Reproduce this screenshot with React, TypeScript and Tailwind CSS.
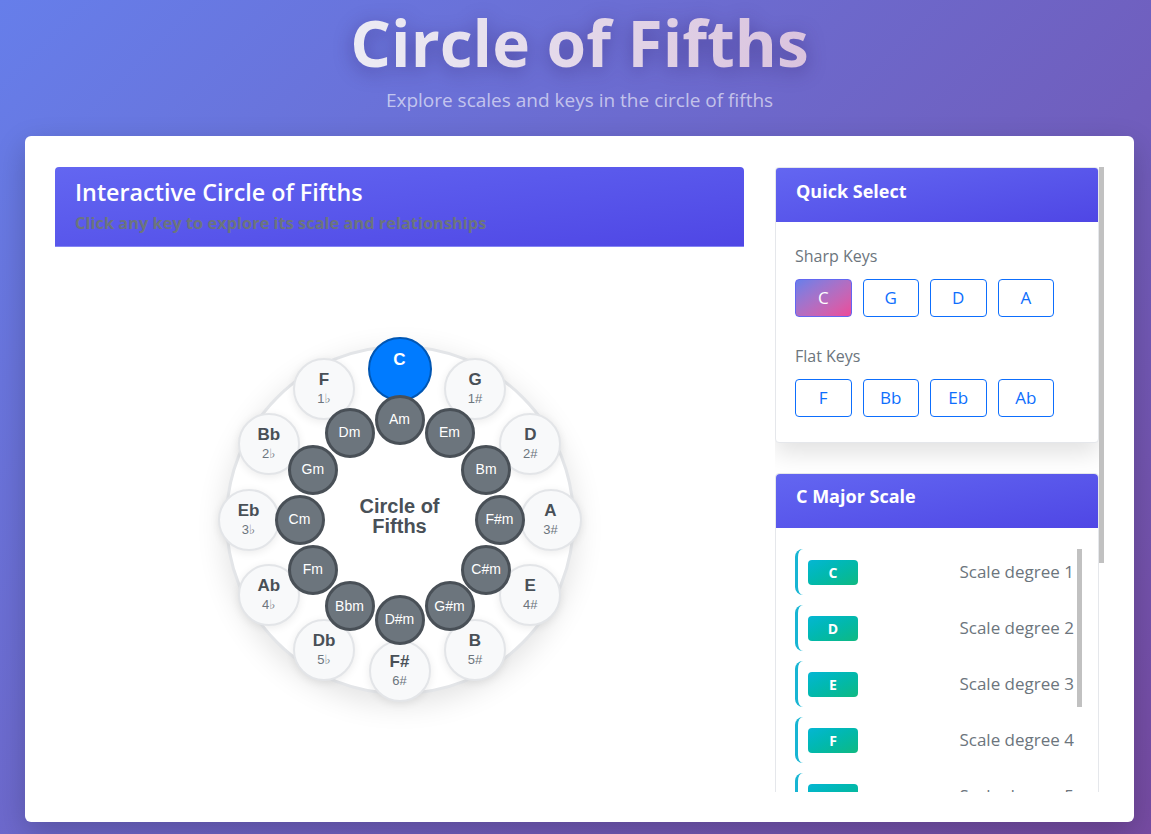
import React from "react";

const majors = [
  { name: "C", sig: "" },
  { name: "G", sig: "1#" },
  { name: "D", sig: "2#" },
  { name: "A", sig: "3#" },
  { name: "E", sig: "4#" },
  { name: "B", sig: "5#" },
  { name: "F#", sig: "6#" },
  { name: "Db", sig: "5♭" },
  { name: "Ab", sig: "4♭" },
  { name: "Eb", sig: "3♭" },
  { name: "Bb", sig: "2♭" },
  { name: "F", sig: "1♭" },
];

const minors = ["Am", "Em", "Bm", "F#m", "C#m", "G#m", "D#m", "Bbm", "Fm", "Cm", "Gm", "Dm"];

const sharpKeys = ["C", "G", "D", "A"];
const flatKeys = ["F", "Bb", "Eb", "Ab"];
const scale = ["C", "D", "E", "F", "G", "A", "B"];

// place a node on the ring, 0 = top, clockwise (172 = centre of the padding box)
function pos(i: number, r: number) {
  const a = (i * Math.PI) / 6;
  return { left: 172 + r * Math.sin(a), top: 172 - r * Math.cos(a) };
}

function KeyButton({ label, active }: { label: string; active?: boolean }) {
  return (
    <button
      className={
        active
          ? "h-[38px] w-[56.5px] rounded-[4px] border border-[#6366f1] bg-gradient-to-br from-[#667eea] to-[#ec4899] text-[17px] text-white"
          : "h-[38px] w-[56.5px] rounded-[4px] border border-[#0d6efd] bg-white text-[17px] text-[#0d6efd]"
      }
    >
      {label}
    </button>
  );
}

function CircleOfFifths() {
  return (
    <div className="relative h-[350px] w-[350px] rounded-full border-[3px] border-[#e3e5e8] bg-white shadow-[0_8px_30px_rgba(0,0,0,0.12)] font-['Liberation_Sans',Arial,sans-serif]">
      {majors.map((k, i) => {
        const active = i === 0;
        return (
          <div
            key={k.name}
            style={pos(i, 151)}
            className={
              active
                ? "absolute flex h-[64px] w-[64px] -translate-x-1/2 -translate-y-1/2 flex-col items-center justify-center rounded-full border-[2px] border-[#0056b3] bg-[#007bff] text-white"
                : "absolute flex h-[62px] w-[62px] -translate-x-1/2 -translate-y-1/2 flex-col items-center justify-center rounded-full border-[2px] border-[#e3e5e8] bg-[#f8f9fa] shadow-[0_2px_8px_rgba(0,0,0,0.08)]"
            }
          >
            <span className={active ? "text-[17px] font-bold leading-[20px] text-white" : "text-[17px] font-bold leading-[20px] text-[#495057]"}>
              {k.name}
            </span>
            <span className="h-[18px] text-[13px] leading-[18px] text-[#6c757d] font-['Liberation_Sans','DejaVu_Sans',sans-serif]">{k.sig}</span>
          </div>
        );
      })}
      {minors.map((m, i) => (
        <div
          key={m}
          style={pos(i, 100)}
          className="absolute flex h-[50px] w-[50px] -translate-x-1/2 -translate-y-1/2 items-center justify-center rounded-full border-[3px] border-[#495057] bg-[#6c757d] text-[14px] text-white"
        >
          {m}
        </div>
      ))}
      <div className="absolute inset-0 flex items-center justify-center pb-[7px]">
        <p className="text-center text-[20px] font-bold leading-[20px] text-[#495057]">
          Circle of
          <br />
          Fifths
        </p>
      </div>
    </div>
  );
}

export default function App() {
  return (
    <div className="h-screen w-full overflow-hidden bg-[linear-gradient(135deg,#667eea_0%,#764ba2_100%)] font-['Open_Sans',sans-serif]">
      <div className="ml-[25px] w-[1109px]">
        {/* Title */}
        <header className="h-[136px] pt-[7px] text-center">
          <h1 className="inline-block bg-gradient-to-r from-[#ececf4] to-[#dac3de] bg-clip-text text-[64px] font-bold leading-[72px] text-transparent drop-shadow-[0_4px_10px_rgba(40,20,90,0.4)]">
            Circle of Fifths
          </h1>
          <p className="mt-[8px] text-[19px] leading-[27px] text-white/60">Explore scales and keys in the circle of fifths</p>
        </header>

        {/* Main card */}
        <main className="rounded-[6px] bg-white px-[30px] pt-[31px] pb-[30px] shadow-[0_10px_30px_rgba(0,0,0,0.2)]">
          <div className="grid h-[625px] grid-cols-[689px_1fr] gap-[31px]">
            {/* Left: circle */}
            <section className="flex flex-col">
              <div className="h-[80px] rounded-t-[4px] border-b border-[#8485f3] bg-gradient-to-br from-[#6366f1] to-[#4f46e5] px-[20px] pt-[11px]">
                <h2 className="text-[23.3px] font-semibold leading-[29px] text-white">Interactive Circle of Fifths</h2>
                <p className="mt-[4px] text-[16.4px] font-bold leading-[24px] text-[#6c757d]">
                  Click any key to explore its scale and relationships
                </p>
              </div>
              <div className="flex flex-1 items-center justify-center">
                <CircleOfFifths />
              </div>
            </section>

            {/* Right: panels */}
            <aside className="relative overflow-hidden">
              <div className="mr-[5px]">
                <div className="overflow-hidden rounded-[4px] border border-[#e5e7eb] bg-white shadow-[0_10px_25px_rgba(0,0,0,0.12)]">
                  <div className="h-[54px] bg-gradient-to-br from-[#6366f1] to-[#4f46e5] px-[20px] pt-[10px]">
                    <h3 className="text-[18px] font-bold leading-[27px] text-white">Quick Select</h3>
                  </div>
                  <div className="px-[19px] pt-[22px] pb-[25px]">
                    <p className="text-[16px] leading-[24px] text-[#6c757d]">Sharp Keys</p>
                    <div className="mt-[11px] flex gap-[11px]">
                      {sharpKeys.map((k) => (
                        <KeyButton key={k} label={k} active={k === "C"} />
                      ))}
                    </div>
                    <p className="mt-[27px] text-[16px] leading-[24px] text-[#6c757d]">Flat Keys</p>
                    <div className="mt-[11px] flex gap-[11px]">
                      {flatKeys.map((k) => (
                        <KeyButton key={k} label={k} />
                      ))}
                    </div>
                  </div>
                </div>

                <div className="mt-[30px] rounded-[4px] border border-[#e5e7eb] bg-white">
                  <div className="h-[54px] rounded-t-[4px] bg-gradient-to-br from-[#6366f1] to-[#4f46e5] px-[20px] pt-[9px]">
                    <h3 className="text-[18px] font-bold leading-[27px] text-white">C Major Scale</h3>
                  </div>
                  <div className="pl-[19px] pr-[16px] pt-[21px]">
                    <div className="relative pr-[6px]">
                      <div className="flex flex-col gap-[10px]">
                        {scale.map((n, i) => (
                          <div
                            key={n}
                            className="flex h-[46px] items-center justify-between rounded-l-[8px] border-l-[3px] border-[#17b5d3] pl-[10px] pr-[2px]"
                          >
                            <span className="flex h-[25px] w-[50px] items-center justify-center rounded-[4px] bg-gradient-to-br from-[#06b6d4] to-[#10b981] text-[14px] font-bold text-white">
                              {n}
                            </span>
                            <span className="text-[17px] text-[#6c757d]">Scale degree {i + 1}</span>
                          </div>
                        ))}
                      </div>
                      <div className="absolute right-0 top-0 h-[158px] w-[5px] bg-[#c1c1c1]" />
                    </div>
                  </div>
                </div>
              </div>
              {/* outer scrollbar thumb */}
              <div className="absolute right-0 top-0 h-[396px] w-[5px] bg-[#c1c1c1]" />
            </aside>
          </div>
        </main>
      </div>
    </div>
  );
}
